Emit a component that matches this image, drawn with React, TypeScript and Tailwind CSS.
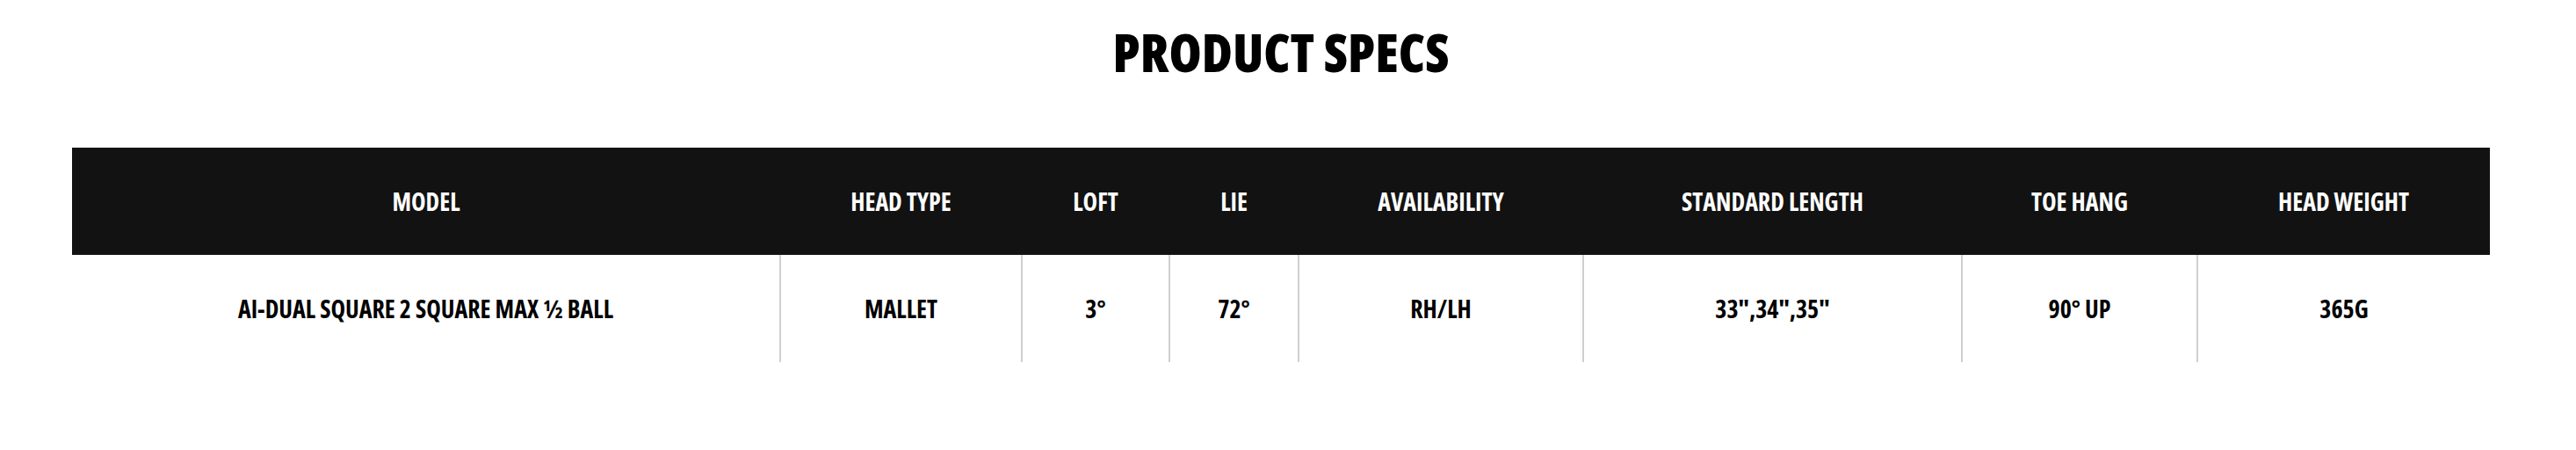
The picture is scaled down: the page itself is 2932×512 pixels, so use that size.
import React from "react";

const specs = [
  { label: "MODEL", value: "AI-DUAL SQUARE 2 SQUARE MAX ½ BALL", w: "w-[806px]" },
  { label: "HEAD TYPE", value: "MALLET", w: "w-[275px]" },
  { label: "LOFT", value: "3°", w: "w-[168px]" },
  { label: "LIE", value: "72°", w: "w-[147px]" },
  { label: "AVAILABILITY", value: "RH/LH", w: "w-[324px]" },
  { label: "STANDARD LENGTH", value: '33",34",35"', w: "w-[431px]" },
  { label: "TOE HANG", value: "90° UP", w: "w-[268px]" },
  { label: "HEAD WEIGHT", value: "365G", w: "w-[333px]" },
];

const ProductSpecs = () => {
  return (
    <div className="w-full bg-white pt-[29px] pb-[100px] pl-[82px] pr-[98px] font-['Open_Sans',sans-serif] font-stretch-condensed">
      <h2 className="text-center text-[60px] leading-none font-extrabold text-black">
        PRODUCT SPECS
      </h2>

      <table className="mt-[79px] w-full table-fixed border-collapse">
        <thead>
          <tr className="bg-[#121212] h-[122px]">
            {specs.map((s) => (
              <th
                key={s.label}
                className={`${s.w} text-center text-white text-[28px] font-bold`}
              >
                {s.label}
              </th>
            ))}
          </tr>
        </thead>
        <tbody>
          <tr className="h-[122px]">
            {specs.map((s, i) => (
              <td
                key={s.label}
                className={
                  i === 0
                    ? "text-center text-black text-[28px] font-bold"
                    : "text-center text-black text-[28px] font-bold border-l-2 border-[#cfcfcf]"
                }
              >
                {s.value}
              </td>
            ))}
          </tr>
        </tbody>
      </table>
    </div>
  );
};

export default function App() {
  return <ProductSpecs />;
}
